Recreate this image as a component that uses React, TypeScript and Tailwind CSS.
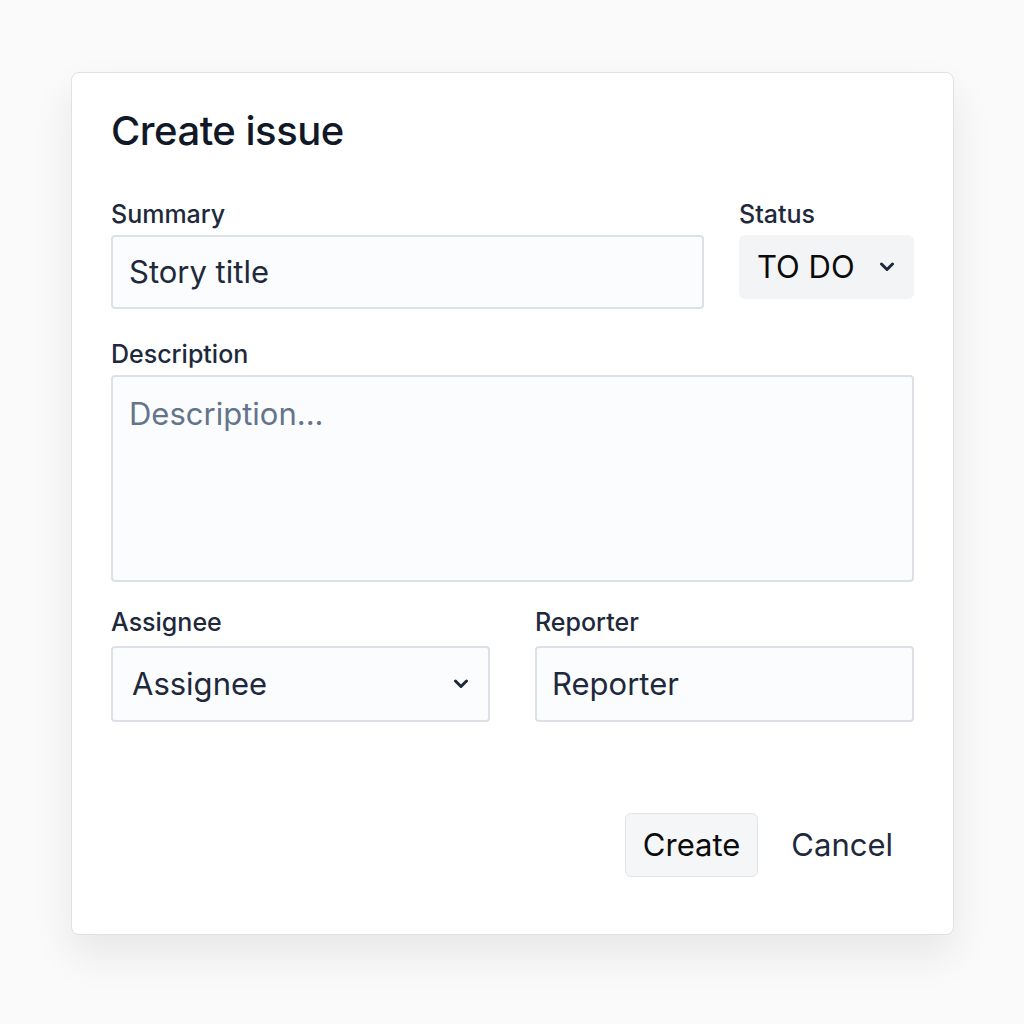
import React from "react";

function Chevron({ className = "" }: { className?: string }) {
  return (
    <svg className={className} width="16" height="10" viewBox="0 0 16 10" fill="none">
      <path d="M2.5 2l5.5 5.5L13.5 2" stroke="currentColor" strokeWidth="3" strokeLinecap="round" strokeLinejoin="round" />
    </svg>
  );
}

export default function App() {
  return (
    <div className="min-h-[1024px] w-full bg-[#fafafa] pt-[72px] pl-[71px]" style={{ fontFamily: "Inter, 'Noto Sans', sans-serif" }}>
      <div className="w-[883px] h-[863px] bg-white border border-[#dfe1e6] rounded-[8px] shadow-[0_20px_40px_rgba(0,0,0,0.08)] px-[39px] pt-[34px] flex flex-col">
        <h1 className="text-[40px] leading-[48px] font-medium text-[#111827] tracking-[-0.5px]">Create issue</h1>

        <div className="mt-[44px] flex gap-[35px]">
          <div className="flex-1 flex flex-col">
            <label className="text-[25px] leading-[30px] font-medium text-[#1e293b]">Summary</label>
            <div className="mt-[6px] h-[74px] border-2 border-[#dde1e7] rounded-[4px] bg-[#fbfcfd] flex items-center px-[16px]">
              <span className="text-[31px] text-[#1e293b]">Story title</span>
            </div>
          </div>
          <div className="w-[175px] flex flex-col">
            <label className="text-[25px] leading-[30px] font-medium text-[#1e293b]">Status</label>
            <div className="mt-[6px] h-[64px] rounded-[6px] bg-[#f3f4f6] flex items-center pl-[18px] pr-[19px] justify-between">
              <span className="text-[31px] text-[#0b0b0b]">TO DO</span>
              <Chevron className="text-[#1e293b]" />
            </div>
          </div>
        </div>

        <div className="mt-[30px] flex flex-col">
          <label className="text-[25px] leading-[30px] font-medium text-[#1e293b]">Description</label>
          <div className="mt-[6px] h-[207px] border-2 border-[#dde1e7] rounded-[4px] bg-[#fbfcfd] px-[16px] pt-[14px]">
            <span className="text-[31px] text-[#64748b]">Description...</span>
          </div>
        </div>

        <div className="mt-[25px] flex gap-[45px]">
          <div className="flex-1 flex flex-col">
            <label className="text-[25px] leading-[30px] font-medium text-[#1e293b]">Assignee</label>
            <div className="mt-[9px] h-[76px] border-2 border-[#dde1e7] rounded-[4px] bg-[#fbfcfd] flex items-center justify-between pl-[19px] pr-[19px]">
              <span className="text-[31px] text-[#1e293b]">Assignee</span>
              <Chevron className="text-[#1e293b]" />
            </div>
          </div>
          <div className="flex-1 flex flex-col">
            <label className="text-[25px] leading-[30px] font-medium text-[#1e293b]">Reporter</label>
            <div className="mt-[9px] h-[76px] border-2 border-[#dde1e7] rounded-[4px] bg-[#fbfcfd] flex items-center px-[15px]">
              <span className="text-[31px] text-[#1e293b]">Reporter</span>
            </div>
          </div>
        </div>

        <div className="mt-[91px] flex justify-end items-center">
          <button className="h-[64px] px-[17px] rounded-[6px] bg-[#f5f6f8] border border-[#e2e4e8] text-[31px] text-[#0b0b0b]">Create</button>
          <button className="ml-[33px] mr-[21px] text-[31px] text-[#1e293b]">Cancel</button>
        </div>
      </div>
    </div>
  );
}
